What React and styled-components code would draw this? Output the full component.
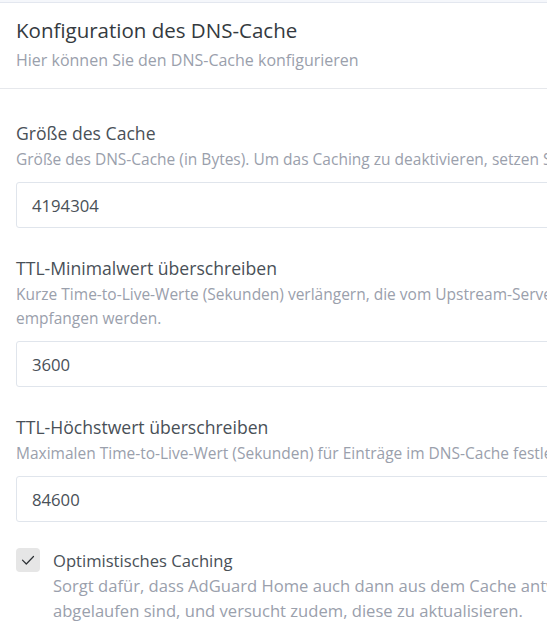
import React from 'react';
import styled, { createGlobalStyle } from 'styled-components';

const GlobalStyle = createGlobalStyle`
  html, body {
    margin: 0;
    padding: 0;
    background: #f5f7fb;
    overflow: hidden;
  }
  body {
    font-family: "Open Sans", "Noto Sans", sans-serif;
    color: #495057;
  }
`;

const fields = [
  {
    label: 'Größe des Cache',
    desc: ['Größe des DNS-Cache (in Bytes). Um das Caching zu deaktivieren, setzen Sie den Wert auf 0.'],
    value: '4194304',
  },
  {
    label: 'TTL-Minimalwert überschreiben',
    desc: [
      'Kurze Time-to-Live-Werte (Sekunden) verlängern, die vom Upstream-Server',
      'empfangen werden.',
    ],
    value: '3600',
  },
  {
    label: 'TTL-Höchstwert überschreiben',
    desc: ['Maximalen Time-to-Live-Wert (Sekunden) für Einträge im DNS-Cache festlegen.'],
    value: '84600',
  },
];

export default function App() {
  return (
    <>
      <GlobalStyle />
      <Page>
        <Card>
          <CardHeader>
            <Title>Konfiguration des DNS-Cache</Title>
            <Subtitle>Hier können Sie den DNS-Cache konfigurieren</Subtitle>
          </CardHeader>
          <CardBody>
            {fields.map((f) => (
              <FormGroup key={f.label}>
                <Label>{f.label}</Label>
                <Description>
                  {f.desc.map((line) => (
                    <div key={line}>{line}</div>
                  ))}
                </Description>
                <Input type="text" defaultValue={f.value} />
              </FormGroup>
            ))}
            <CheckRow>
              <CheckBox>
                <svg width="16" height="16" viewBox="0 0 16 16" fill="none">
                  <path d="M2.5 8.2 L6.3 12 L13.5 4.5" stroke="#2b2f33" strokeWidth="1.2" strokeLinecap="round" strokeLinejoin="round" />
                </svg>
              </CheckBox>
              <CheckText>
                <CheckLabel>Optimistisches Caching</CheckLabel>
                <CheckDesc>
                  Sorgt dafür, dass AdGuard Home auch dann aus dem Cache antwortet, wenn die Einträge
                  <br />
                  abgelaufen sind, und versucht zudem, diese zu aktualisieren.
                </CheckDesc>
              </CheckText>
            </CheckRow>
          </CardBody>
        </Card>
      </Page>
    </>
  );
}

const Page = styled.div`
  padding-top: 2px;
`;

const Card = styled.div`
  width: 900px;
  background: #fff;
  border-top: 1px solid #e3e7ef;
  min-height: 700px;
`;

const CardHeader = styled.div`
  padding: 13px 16px 18px;
  border-bottom: 1px solid #e6e8ec;
`;

const Title = styled.h3`
  margin: 0;
  font-size: 20.5px;
  font-weight: 400;
  line-height: 28px;
  color: #343a40;
`;

const Subtitle = styled.div`
  margin-top: 6px;
  font-size: 16px;
  line-height: 20px;
  color: #9aa0ac;
`;

const CardBody = styled.div`
  display: flex;
  flex-direction: column;
  gap: 28px;
  padding: 32px 16px;
`;

const FormGroup = styled.div`
  display: flex;
  flex-direction: column;
`;

const Label = styled.div`
  font-size: 17.6px;
  line-height: 24px;
  color: #495057;
`;

const Description = styled.div`
  margin-top: 2px;
  margin-bottom: 11px;
  font-size: 15.5px;
  line-height: 24px;
  color: #9aa0ac;
  white-space: nowrap;
`;

const Input = styled.input`
  display: block;
  box-sizing: border-box;
  width: 100%;
  height: 46px;
  padding: 0 15px;
  border: 1px solid #e0e5ec;
  border-radius: 3px;
  font-family: inherit;
  font-size: 16.7px;
  color: #495057;
  background: #fff;
  outline: none;
`;

const CheckRow = styled.div`
  display: flex;
  align-items: flex-start;
  gap: 13px;
  margin-top: -2px;
`;

const CheckBox = styled.div`
  flex: none;
  width: 24px;
  height: 24px;
  border-radius: 4px;
  background: #e6e6e6;
  display: flex;
  align-items: center;
  justify-content: center;
`;

const CheckText = styled.div`
  display: flex;
  flex-direction: column;
`;

const CheckLabel = styled.div`
  font-size: 16.6px;
  line-height: 26px;
  color: #495057;
`;

const CheckDesc = styled.div`
  font-size: 16.6px;
  line-height: 24.5px;
  color: #9aa0ac;
  white-space: nowrap;
`;
